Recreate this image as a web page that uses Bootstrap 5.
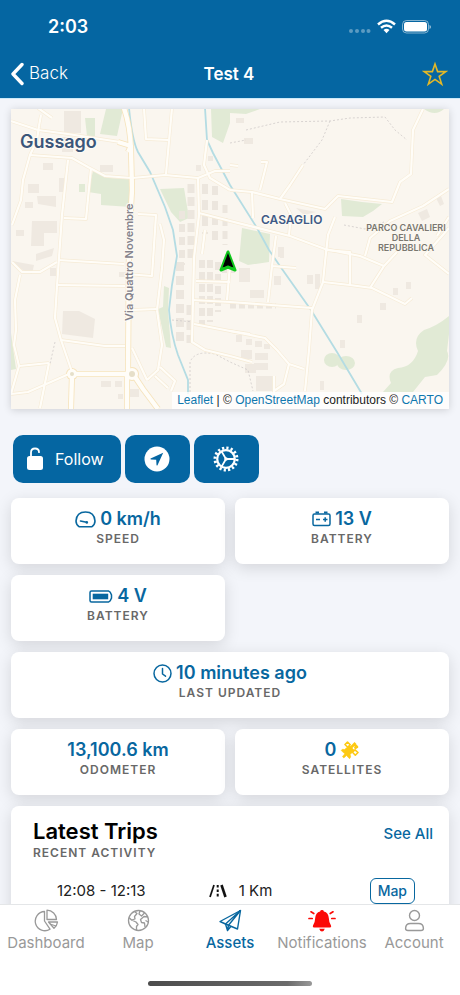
<!DOCTYPE html>
<html lang="en">
<head>
<meta charset="utf-8">
<meta name="viewport" content="width=device-width, initial-scale=1">
<title>Test 4</title>
<link href="https://cdn.jsdelivr.net/npm/bootstrap@5.3.0/dist/css/bootstrap.min.css" rel="stylesheet">
<style>
  :root { --brand: #0566a2; --accent: #08679f; }
  body { font-family: Inter, "Liberation Sans", sans-serif; background: #f3f5fa; color: #222; }
  svg { display: block; flex: none; }
  a { text-decoration: none; }
  .app-head { background: var(--brand); border-bottom: 1px solid #cdeaf9; }
  .status-bar { height: 50px; padding: 4px 29px 0 48px; }
  .clock { font-size: 18px; line-height: 24px; font-weight: 600; }
  .title-bar { height: 48px; padding: 0 12px 0 10px; }
  .title-bar > * { flex: 1 1 0; }
  .back { font-size: 17px; font-weight: 300; color: #fff; gap: 5px; }
  .title-text { font-size: 17px; font-weight: 600; }
  .scroll-area { overflow-y: auto; min-height: 0; scrollbar-width: none; padding: 10px 11px 0; }
  .scroll-area::-webkit-scrollbar { display: none; }
  .map-box { box-shadow: 0 1px 8px rgba(0,0,0,.16); background: #faf6ef; }
  .map-box > svg { width: 100%; height: auto; }
  .map-credit { right: 0; bottom: 0; padding: 0 6px 0 5px; font: 12px/17px "Liberation Sans", sans-serif; background: rgba(255,255,255,.8); white-space: nowrap; }
  .map-credit a { color: #0f77ae; }
  .actions { gap: 4px; margin: 26px 2px 15px; }
  .btn-act { --bs-btn-bg: var(--brand); --bs-btn-color: #fff; --bs-btn-hover-bg: #04558a; --bs-btn-hover-color: #fff; --bs-btn-active-bg: #04558a; --bs-btn-active-color: #fff;
    height: 48px; min-width: 65px; border: 0; border-radius: 10px; font-size: 16px; padding: 0 17px 0 13px; gap: 11px; }
  .btn-sq { padding: 0; }
  .tiles { --bs-gutter-x: 10px; --bs-gutter-y: 11px; }
  .tile { border: 0; border-radius: 8px; box-shadow: 0 4px 16px rgba(0,0,0,.13); }
  .stat { padding: 11px 8px 15px; }
  .stat-val { font-size: 18px; line-height: 20px; font-weight: 600; color: var(--accent); gap: 4px; }
  .cap { font-size: 12px; line-height: 20px; font-weight: 600; color: #686868; text-transform: uppercase; letter-spacing: 1px; }
  .trips { margin-top: 11px; padding: 13px 16px 16px 22px; }
  .trips h2 { font-size: 22px; line-height: 24px; font-weight: 600; color: #000; }
  .see-all { font-size: 15px; font-weight: 500; color: var(--accent); line-height: 30px; }
  .trip { font-size: 15px; line-height: 20px; padding: 15px 18px 0 24px; }
  .trip > * { flex: 1 1 0; }
  .trip-dist { gap: 11px; padding-left: 8px; }
  .btn-map { --bs-btn-color: var(--accent); --bs-btn-border-color: var(--accent); --bs-btn-hover-bg: var(--accent); --bs-btn-hover-color: #fff;
    font-size: 14px; line-height: 24px; font-weight: 500; padding: 0 7px; border-radius: 6px; }
  .tab-bar { background: #fff; border-top: 1px solid #e4e6e8; padding-bottom: 9px; }
  .tab { color: #999; font-size: 15px; line-height: 20px; padding-top: 3px; }
  .tab.on { color: var(--accent); font-weight: 500; }
  .home-line { width: 164px; height: 5px; margin-top: 28px; border-radius: 3px; background: linear-gradient(90deg,#4c4c4c,#6b6b6b 85%,#999); }
</style>
<script src="https://cdn.jsdelivr.net/npm/bootstrap@5.3.0/dist/js/bootstrap.bundle.min.js"></script>
</head>
<body class="vh-100 d-flex flex-column">

<header class="app-head text-white">
  <div class="status-bar d-flex align-items-center">
    <span class="clock me-auto">2:03</span>
    <svg width="83" height="18" viewBox="0 0 83 18" fill="#fff" aria-hidden="true">
      <g opacity=".35"><circle cx="3" cy="13" r="2"/><circle cx="9" cy="13" r="2"/><circle cx="15" cy="13" r="2"/><circle cx="20.500" cy="13" r="2"/></g>
      <g fill="none" stroke="#fff" stroke-width="2.500"><path d="M30 6.500Q38.500-1 47 6.500"/><path d="M33 9.800q5.500-4.600 11 0"/></g>
      <path d="M38.500 15.200 35.500 12q3-2.400 6 0z"/>
      <rect x="54.500" y="2.500" width="26" height="12.500" rx="4" fill="none" stroke="#fff" stroke-opacity=".5"/>
      <rect x="56" y="4" width="23" height="9.500" rx="2.500"/>
      <path d="M81.500 7v4q1.500-.6 1.500-2t-1.500-2" opacity=".6"/>
    </svg>
  </div>
  <nav class="title-bar d-flex align-items-center">
    <a href="#" class="back d-flex align-items-center">
      <svg width="14" height="24" viewBox="0 0 14 24" fill="none" stroke="#fff" stroke-width="3.400" stroke-linecap="round" stroke-linejoin="round" aria-hidden="true"><path d="M12 2.500 3 12l9 9.500"/></svg>
      Back
    </a>
    <h1 class="title-text text-center mb-0">Test 4</h1>
    <div class="d-flex justify-content-end">
      <button class="btn p-0 border-0" aria-label="Favourite">
        <svg width="26" height="26" viewBox="0 0 26 26" fill="none" stroke="#e3b827" stroke-width="1.600" stroke-linejoin="miter"><path d="M13 3l2.600 7.600h8.200l-6.600 4.800 2.500 7.700-6.700-4.700-6.700 4.700 2.500-7.700-6.600-4.800h8.200z"/></svg>
      </button>
    </div>
  </nav>
</header>

<main class="scroll-area flex-grow-1">
  <section class="map-box position-relative" aria-label="Map">
    <svg viewBox="11 109 438 300" role="img" aria-label="Street map around Gussago">
      <defs>
        <g id="roads-minor">
          <path d="M11 121 38 130 68 134 120 142"/><path d="M52 118 38 108M39 126 41 115"/>
          <path d="M39 126 37 140 30 155 23 180 21 200 12 225"/><path d="M30 155 72 158 88 167 105 176 132 178 165 175 198 178 215 171 230 171"/>
          <path d="M68 160 62 215 59 258 57 286 55 318 61 340 72 372"/><path d="M91 168 86 219 64 218"/>
          <path d="M144 108 146 139 168 140M172 108 166 174"/>
          <path d="M58 260 124 264M57 285 125 286M12 262 22 272 40 272 57 262M20 275 15 300 16 330 14 345 19 366 11 394"/>
          <path d="M19 366 49 363M11 394 28 392 69 374M49 363 40 408M61 340 105 346 125 346"/>
          <path d="M138 214 156 215 152 276 126 274M160 224 164 240 162 268 157 310M132 310 156 309M157 310 162 345 158 370 147 380M132 348 140 365 147 380M160 367 175 381 171 391M155 376 168 388"/>
          <path d="M207 140 204 165 210 178 230 190"/><path d="M198 178 199 215 194 258 192 342 205 350 230 356"/>
          <path d="M199 213 230 221 290 236 325 249 360 256 384 266M196 281 230 282M205 230 202 254M230 265 227 300"/>
          <path d="M194 324 230 331 250 334M192 300 230 302 312 308"/>
          <path d="M230 190 252 192 280 199 325 209 338 196 392 202 400 182 411 174 413 130 423 109"/>
          <path d="M230 165 238 166M261 162 267 162 260 190M252 192 253 218M280 199 290 185 303 165M285 203 291 215 289 235"/>
          <path d="M449 189 423 206 390 221 370 238 365 256"/><path d="M335 217 328 235 325 262 323 282 312 310 309 350 305 391"/>
          <path d="M276 236 272 266 268 302M272 266 296 268M325 250 350 252 350 285M323 282 350 285 372 288 405 304 412 298"/>
          <path d="M397 252 384 266 370 288M449 228 425 255 449 274M449 217 437 236"/>
          <path d="M230 331 265 338 277 350 289 364 304 369M289 364 284 384 274 391M230 356 252 362M274 376 274 408"/>
        </g>
        <g id="roads-main"><path d="M122 103Q130 122 131 150L132 190 129 240 128 374M127 374V409M72 374H131M72 374 71 409M133 374 143 389 158 409M118 142 131 146 128 152"/></g>
      </defs>
      <rect x="11" y="108" width="438" height="302" fill="#faf6ef"/>
      <g fill="#e1ead5">
        <path d="M85 118h10v18h-8zM106 109h17l-6 27-17-2zM93 171l16 7 22 1v28l-30-2v-11l-13-2zM79 184h6v8h-6z"/>
        <path d="M160 189l24-1 5 30-9 4-9-10zM211 109h19v14l-7 20-11-6zM242 228l28 6-1 28-21 3-9-4z"/>
        <path d="M341 199l21 3 20 2-9 7-10 6-21-1zM230 109h30l-14 5-16-1zM424 109h20q-9 8-20 0"/>
        <path d="M164 286l5 2-1 22 3 38-5-1-8-38 5-2zM11 333l5 36-5 1z"/>
        <path d="M449 316q-12 10-25 14-12 8-6 21-5 16-20 17-12 3-7 15l-8 9h30l12-15 12-2q15-15 10-24l2-17z"/>
        <ellipse cx="332" cy="360" rx="8" ry="7"/><ellipse cx="346" cy="363" rx="9" ry="7"/>
      </g>
      <g fill="#efe9e1">
        <path d="M64 111h17v22H64zM62 137h11v15H62zM43 163h10v7H43zM100 165h13v7h-13zM28 184h11v9H28zM37 196h19v11l-18-3zM59 178h5v14h-5zM25 202h8v6h-8zM32 221h25v12H44v13H31zM16 230h8v6h-8z"/>
        <path d="M63 311h16l16 8-2 19-31-4zM36 254l18-6-2 8-16 5zM12 261l22 4-2 9-18-8zM50 268h6v8h-6zM119 272h7v5h-7zM101 381h10v6h-10zM115 381h7v6h-7zM118 394h5v5h-5zM130 389h9v8h-9z"/>
        <path d="M256 376h17v15h-17zM245 364h11v9h-11zM241 350h11v9h-11zM255 353h13v7h-13zM254 363h14v7h-14zM236 335h6v7h-6zM246 339h6v6h-6zM255 341h7v6h-7zM264 344h6v5h-6z"/>
        <path d="M274 276h7v9h-7zM307 275h6v9h-6zM315 274h5v15h-5zM239 268h11v14h-11zM250 290h14v8h-14zM393 288h5v7h-5zM406 282h5v7h-5zM380 303h6v7h-6zM357 315h5v8h-5zM340 340h5v8h-5zM320 381h4v9h-4zM278 247h6v10h-6zM280 250h4v8h-4zM236 118h8v5h-8zM244 138h9v6h-9zM296 208l20 4-12 3zM418 213l9-4 3 8-8 4zM436 198l5-2 3 8-4 2zM196 165h5v6h-5zM208 156h5v5h-5z"/>
      </g>
      <g stroke="#ece6de" fill="none">
        <path d="M191 184v78" stroke-width="7" stroke-dasharray="9 4"/><path d="M182 211v54" stroke-width="6" stroke-dasharray="8 5"/>
        <path d="M180 262v80" stroke-width="8" stroke-dasharray="9 5"/><path d="M190 305v38" stroke-width="7" stroke-dasharray="10 5"/>
        <path d="M202 260v65" stroke-width="6" stroke-dasharray="8 4"/><path d="M210 260v62" stroke-width="6" stroke-dasharray="8 4"/><path d="M218 262v50" stroke-width="6" stroke-dasharray="8 4"/>
        <path d="M205 184v50" stroke-width="6" stroke-dasharray="10 6"/><path d="M215 186v58" stroke-width="6" stroke-dasharray="9 6"/><path d="M225 205v40" stroke-width="5" stroke-dasharray="8 5"/>
        <path d="M230 306h46" stroke-width="5" stroke-dasharray="6 3"/><path d="M222 270h14" stroke-width="6" stroke-dasharray="5 3"/>
      </g>
      <g fill="none" stroke="#b4dce3" stroke-width="1.800">
        <path d="M129 108Q132 140 138 152L150 172 165 207 173 230 177 256 172 285 169 310Q171 335 178 355L188 380V394"/>
        <path d="M205 108 207 140 213 153 230 185 257 228 269 250 282 269 311 310 337 352 362 394"/>
      </g>
      <g fill="none" stroke="#cfcac9" stroke-width=".8" stroke-dasharray="2 2">
        <path d="M246 130 280 122 330 121 350 118 385 117 395 130 407 140M330 121 322 140 303 165M230 143 246 140M344 225 365 229 384 222M55 342 50 364M190 392V362Q195 350 215 354L230 362 248 370 253 391M172 320 194 322"/>
      </g>
      <g fill="none" stroke-linejoin="round">
        <use href="#roads-minor" stroke="#f6ebd6" stroke-width="3.400"/>
        <use href="#roads-main" stroke="#f6e3bb" stroke-width="6"/>
        <g fill="#f6e3bb"><circle cx="72" cy="374" r="6"/><circle cx="132" cy="374" r="7"/></g>
        <use href="#roads-minor" stroke="#fffdf8" stroke-width="2.200"/>
        <use href="#roads-main" stroke="#fffdf8" stroke-width="4.400"/>
        <g fill="#fffdf8"><circle cx="72" cy="374" r="5"/><circle cx="132" cy="374" r="6"/></g>
        <g fill="#e6dfc9"><circle cx="72" cy="374" r="2"/><circle cx="132" cy="374" r="3"/></g>
      </g>
      <g font-family="Inter, sans-serif" paint-order="stroke" stroke="#fdfaf4" stroke-width="2" stroke-linejoin="round">
        <text x="20" y="148" font-size="18" font-weight="600" fill="#3b5679">Gussago</text>
        <text x="261" y="224" font-size="12" font-weight="600" fill="#3f5a86">CASAGLIO</text>
        <g font-size="9" font-weight="600" fill="#7a776f" text-anchor="middle" stroke-width="1">
          <text x="406" y="231">PARCO CAVALIERI</text><text x="406" y="241">DELLA</text><text x="406" y="251">REPUBBLICA</text>
        </g>
        <text transform="translate(133 321) rotate(-90)" font-size="11" font-weight="600" fill="#85838c">Via Quattro Novembre</text>
      </g>
      <path d="M228 252 235 270 228 267 221 270z" fill="#0a0a0a" stroke="#10c81c" stroke-width="3" stroke-linejoin="round"/>
      <path d="M228 253 233.500 267.500 228 265 222.500 267.500z" fill="#000"/>
    </svg>
    <div class="map-credit position-absolute"><a href="#">Leaflet</a> | © <a href="#">OpenStreetMap</a> contributors © <a href="#">CARTO</a></div>
  </section>

  <div class="actions d-flex">
    <button class="btn btn-act d-flex align-items-center">
      <svg width="18" height="24" viewBox="0 0 18 24" aria-hidden="true"><rect x="1" y="9" width="16" height="14" rx="2.500" fill="#fff"/><path d="M5 10V5.500Q5 1.500 9 1.500T13 5.200" fill="none" stroke="#fff" stroke-width="1.800" stroke-linecap="round"/></svg>
      Follow
    </button>
    <button class="btn btn-act btn-sq d-flex align-items-center justify-content-center" aria-label="Navigate">
      <svg width="26" height="26" viewBox="0 0 26 26"><circle cx="13" cy="13" r="12.500" fill="#fff"/><path d="M19.200 6.800 6.600 12.600Q6 13.300 7 13.500L12.200 13.800 12.500 19Q12.900 20 13.500 19.300z" fill="#0566a2"/></svg>
    </button>
    <button class="btn btn-act btn-sq d-flex align-items-center justify-content-center" aria-label="Settings">
      <svg width="26" height="26" viewBox="0 0 26 26" fill="none" stroke="#fff"><circle cx="13" cy="13" r="11" stroke-width="3" stroke-dasharray="2.200 2.120"/><circle cx="13" cy="13" r="8.800" stroke-width="2.200"/><circle cx="13" cy="13" r="1.800" fill="#fff" stroke="none"/><path d="M13 13h8.500M13 13 8.700 5.600M13 13 8.700 20.400" stroke-width="1.800"/></svg>
    </button>
  </div>

  <section class="row tiles text-center" aria-label="Status">
    <div class="col-6"><div class="card tile stat">
      <div class="stat-val d-flex align-items-center justify-content-center">
        <svg width="21" height="17" viewBox="0 0 21 17" fill="none" stroke="currentColor" stroke-width="1.600" stroke-linejoin="round" aria-hidden="true"><path d="M4 15.700Q1 13.500 1 10 1.600 1 10.500 1T20 10q0 3.500-3 5.700z"/><path d="M5.500 10l6 1.200" stroke-linecap="round"/><circle cx="11.800" cy="11.400" r="1.300" fill="currentColor" stroke="none"/></svg>
        0 km/h</div>
      <div class="cap">Speed</div></div></div>
    <div class="col-6"><div class="card tile stat">
      <div class="stat-val d-flex align-items-center justify-content-center">
        <svg width="19" height="16" viewBox="0 0 19 16" fill="none" stroke="currentColor" stroke-width="1.500" aria-hidden="true"><rect x="1" y="3" width="17" height="11.500" rx="1.500"/><path d="M3.500 1.500h3.500M12 1.500h3.500" stroke-width="2"/><path d="M4 8.500h4M11 8.500h4.500M13.200 6.200v4.600"/></svg>
        13 V</div>
      <div class="cap">Battery</div></div></div>
    <div class="col-6"><div class="card tile stat">
      <div class="stat-val d-flex align-items-center justify-content-center">
        <svg width="24" height="13" viewBox="0 0 24 13" fill="none" stroke="currentColor" stroke-width="1.500" aria-hidden="true"><path d="M2.500 1H19.500L21.200 2.200 22.500 5v3l-1.300 2.800L19.500 12H2.500Q1 12 1 10.500v-8Q1 1 2.500 1z"/><rect x="3.700" y="3.700" width="15.500" height="5.600" fill="currentColor" stroke="none"/></svg>
        4 V</div>
      <div class="cap">Battery</div></div></div>
    <div class="col-12"><div class="card tile stat">
      <div class="stat-val d-flex align-items-center justify-content-center">
        <svg width="19" height="19" viewBox="0 0 19 19" fill="none" stroke="currentColor" stroke-width="1.500" stroke-linecap="round" stroke-linejoin="round" aria-hidden="true"><circle cx="9.500" cy="9.500" r="8.500"/><path d="M9.500 4.500v5.500l3 2.200"/></svg>
        10 minutes ago</div>
      <div class="cap">Last updated</div></div></div>
    <div class="col-6"><div class="card tile stat">
      <div class="stat-val">13,100.6 km</div>
      <div class="cap">Odometer</div></div></div>
    <div class="col-6"><div class="card tile stat">
      <div class="stat-val d-flex align-items-center justify-content-center">0
        <svg width="19" height="19" viewBox="0 0 19 19" fill="none" stroke="#fdc913" stroke-width="1.600" stroke-linejoin="round" aria-hidden="true"><path d="M1.200 9.500Q2 7.500 4.500 8.500L9.500 4.500 14.500 9.500 10 13.500Q11.500 16 9.500 17.700L6.500 14.500 3.800 17 2.500 15.500 4.800 12.800z" fill="#fdc913" stroke-width=".6"/><path d="M5 3.500 7.500 1 10.200 3.700 7.700 6.300zM12.500 11.300 15 8.800 18 11.500 15.300 14.200z" fill="#fff"/><path d="M11 6.500 15.500 2M13.500 2.500 17 6 14.500 7.500" stroke-width="2.600"/></svg>
      </div>
      <div class="cap">Satellites</div></div></div>
  </section>

  <section class="card tile trips">
    <div class="d-flex justify-content-between">
      <div><h2 class="mb-0">Latest Trips</h2><div class="cap">Recent activity</div></div>
      <a href="#" class="see-all">See All</a>
    </div>
    <div class="trip d-flex align-items-center">
      <span>12:08 - 12:13</span>
      <span class="trip-dist d-flex align-items-center justify-content-center">
        <svg width="20" height="14" viewBox="0 0 20 14" stroke="#111" fill="none" aria-hidden="true"><path d="M6 1 2 13" stroke-width="1.700"/><path d="M13.500 1 17.500 13" stroke-width="2.600"/><path d="M9.700 1v12" stroke-width="2" stroke-dasharray="2.600 1.800"/></svg>
        1 Km
      </span>
      <span class="d-flex justify-content-end"><button class="btn btn-map">Map</button></span>
    </div>
  </section>
</main>

<footer class="tab-bar">
  <nav class="row g-0 text-center" aria-label="Main">
    <a href="#" class="col tab d-flex flex-column align-items-center">
      <svg width="25" height="25" viewBox="0 0 25 25" fill="none" stroke="currentColor" stroke-width="1.300" stroke-linejoin="round" aria-hidden="true"><path d="M10.500 3.500A9.600 9.600 0 1 0 16 21.200L10.500 13z"/><path d="M13 2.200A9.500 9.500 0 0 1 22.500 11.500H13z"/><path d="M14.500 14H23.500Q23 18 20 20.300z"/><path d="M16 16 22 18" /></svg>
      Dashboard</a>
    <a href="#" class="col tab d-flex flex-column align-items-center">
      <svg width="25" height="25" viewBox="0 0 25 25" fill="none" stroke="currentColor" stroke-width="1.300" stroke-linejoin="round" aria-hidden="true"><circle cx="12.500" cy="12.500" r="10"/><path d="M8.500 3.500 11 5.500 8.500 8.500 9 11 5.500 12 3 9.500M5.500 12 10 14 12 16.500 10.500 18.500V22M14 2.700 13 6 15.500 8 18.500 5M22 9 18 8.500 14.500 11.500 15.500 14.500 18.500 15 19 19M22.300 14 19.500 12.500"/></svg>
      Map</a>
    <a href="#" class="col tab on d-flex flex-column align-items-center" aria-current="page">
      <svg width="25" height="25" viewBox="0 0 25 25" fill="none" stroke="currentColor" stroke-width="1.400" stroke-linejoin="round" aria-hidden="true"><path d="M22.500 2.500 2 13.500 7.500 16 19.500 21z"/><path d="M22.500 2.500 7.500 16 9.500 22.500 13 18.300M22.500 2.500 10.500 17.200 9.500 22.500"/></svg>
      Assets</a>
    <a href="#" class="col tab d-flex flex-column align-items-center">
      <svg width="28" height="25" viewBox="0 0 28 25" fill="#fb0a06" aria-hidden="true"><path d="M14 2q1.600 0 1.900 1.400 4.600 1.200 4.900 6.600.2 5 2.200 7.500.8 2-1 2H6q-1.800 0-1-2 2-2.500 2.200-7.500.3-5.400 4.900-6.600Q12.400 2 14 2zM11.200 20.800h5.600q-.8 2.700-2.800 2.700t-2.800-2.700z"/><path d="M5.800 5.500 3 3.800M4.200 10.500H1M22.200 5.500 25 3.800M23.800 10.500H27" stroke="#fb0a06" stroke-width="1.700" stroke-linecap="round"/></svg>
      Notifications</a>
    <a href="#" class="col tab d-flex flex-column align-items-center">
      <svg width="25" height="25" viewBox="0 0 25 25" fill="none" stroke="currentColor" stroke-width="1.400" aria-hidden="true"><circle cx="12.500" cy="7.500" r="5"/><path d="M6 22.500Q3.600 22.500 3.600 20.500 3.600 15.500 8.500 15.500h8q4.900 0 4.900 5 0 2-2.400 2z"/></svg>
      Account</a>
  </nav>
  <div class="home-line mx-auto"></div>
</footer>
</body>
</html>
